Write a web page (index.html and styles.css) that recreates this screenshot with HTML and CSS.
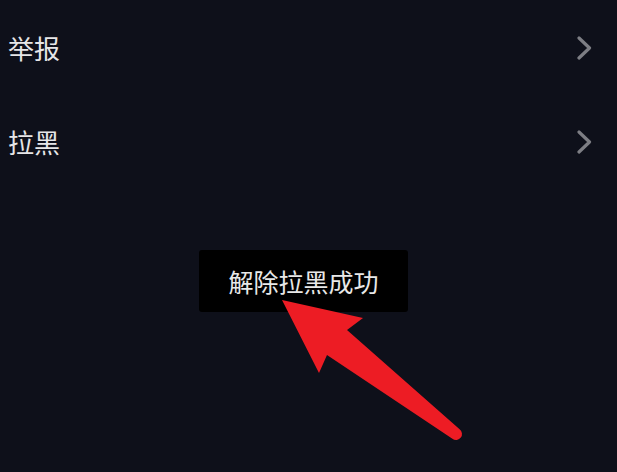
FILE: index.html
```html
<!DOCTYPE html>
<html lang="zh-CN">
<head>
<meta charset="utf-8">
<title>设置</title>
<link rel="stylesheet" href="styles.css">
</head>
<body>
<div class="screen">
  <ul class="menu">
    <li class="row"><span class="label">举报</span>
      <svg class="chev" viewBox="0 0 15 24" width="15" height="24"><path d="M2 2 L12.5 12 L2 22" fill="none" stroke="#7d7e84" stroke-width="3.2" stroke-linecap="round" stroke-linejoin="round"/></svg>
    </li>
    <li class="row"><span class="label">拉黑</span>
      <svg class="chev" viewBox="0 0 15 24" width="15" height="24"><path d="M2 2 L12.5 12 L2 22" fill="none" stroke="#7d7e84" stroke-width="3.2" stroke-linecap="round" stroke-linejoin="round"/></svg>
    </li>
  </ul>
  <div class="toast">解除拉黑成功</div>
  <svg class="arrow" viewBox="0 0 617 472" width="617" height="472">
    <path d="M282 300 L363 318 L347 330 L459.6 429.2 A6 6 0 0 1 452.4 438.8 L327 355 L319 373 Z" fill="#ed1c24"/>
  </svg>
</div>
</body>
</html>
```
FILE: styles.css
```css
html, body {
  margin: 0;
  padding: 0;
  background: #0e101a;
}
.screen {
  position: relative;
  width: 617px;
  height: 472px;
  overflow: hidden;
  background: #0e101a;
  font-family: "Noto Sans CJK SC", "Noto Sans", sans-serif;
}
.menu {
  list-style: none;
  margin: 0;
  padding: 1px 0 0 0;
}
.row {
  height: 94px;
  display: flex;
  align-items: center;
  justify-content: space-between;
  padding: 0 25px 0 8px;
}
.label {
  color: #e6e6e8;
  font-size: 26px;
  line-height: 1;
}
.chev {
  display: block;
}
.toast {
  position: absolute;
  left: 199px;
  top: 250px;
  width: 209px;
  height: 62px;
  background: #000;
  border-radius: 3px;
  color: #e8e8e8;
  font-size: 25px;
  display: flex;
  align-items: center;
  justify-content: center;
  line-height: 1;
}
.arrow {
  position: absolute;
  left: 0;
  top: 0;
  pointer-events: none;
}
```
